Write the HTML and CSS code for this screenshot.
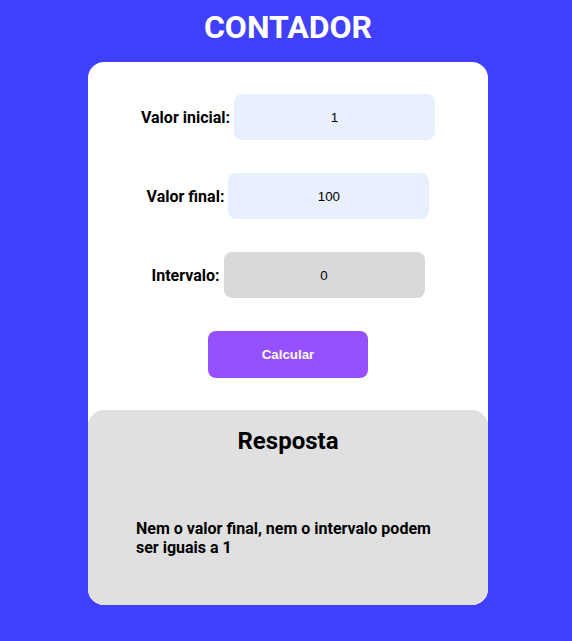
FILE: index.html
```html
<!DOCTYPE html>
<html lang="pt-BR">
<head>
<meta charset="utf-8">
<title>Contador</title>
<link rel="stylesheet" href="styles.css">
</head>
<body>
<h1 class="title">CONTADOR</h1>
<main class="card">
  <form class="form">
    <div class="row">
      <label class="label" for="inicio">Valor inicial:</label>
      <input class="field field-auto" id="inicio" type="text" value="1">
    </div>
    <div class="row">
      <label class="label" for="fim">Valor final:</label>
      <input class="field field-auto" id="fim" type="text" value="100">
    </div>
    <div class="row">
      <label class="label" for="passo">Intervalo:</label>
      <input class="field field-grey" id="passo" type="text" value="0">
    </div>
    <div class="row">
      <button class="btn" type="button">Calcular</button>
    </div>
  </form>
  <section class="answer">
    <h2 class="answer-title">Resposta</h2>
    <p class="answer-text">Nem o valor final, nem o intervalo podem ser iguais a 1</p>
  </section>
</main>
</body>
</html>
```
FILE: styles.css
```css
* { box-sizing: border-box; }
html, body { margin: 0; padding: 0; }
body {
  background: #4040fc;
  font-family: Roboto, "Liberation Sans", Arial, sans-serif;
  color: #000;
  min-height: 641px;
  padding: 8px 0 0 4px;
}
.title {
  margin: 0 0 16px;
  text-align: center;
  color: #fff;
  font-size: 32px;
  line-height: 38px;
  font-weight: 700;
}
.card {
  width: 400px;
  margin: 0 auto;
  background: #fff;
  border-radius: 16px;
}
.form {
  padding-top: 32px;
  display: flex;
  flex-direction: column;
  gap: 33px;
  padding-bottom: 32px;
}
.row {
  display: flex;
  justify-content: center;
  align-items: center;
  gap: 4px;
}
.label {
  font-size: 16px;
  font-weight: 700;
}
.field {
  width: 201px;
  height: 46px;
  border: none;
  border-radius: 8px;
  text-align: center;
  font-family: "Liberation Sans", Arial, sans-serif;
  font-size: 13.33px;
  color: #000;
  outline: none;
}
.field-auto { background: #e8f0fe; }
.field-grey { background: #d9d9d9; }
.btn {
  width: 160px;
  height: 47px;
  border: none;
  border-radius: 8px;
  background: #9650ff;
  color: #fff;
  font-family: "Liberation Sans", Arial, sans-serif;
  font-size: 13.33px;
  font-weight: 700;
}
.answer {
  background: #e0e0e0;
  border-radius: 16px;
  height: 195px;
  padding: 17px 48px 0;
}
.answer-title {
  margin: 0;
  text-align: center;
  font-size: 24px;
  font-weight: 700;
  line-height: 28px;
}
.answer-text {
  margin: 64px 0 0;
  font-size: 16px;
  font-weight: 700;
  line-height: 19px;
}
```
